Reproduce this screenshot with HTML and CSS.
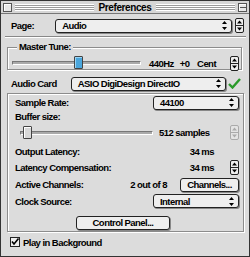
FILE: index.html
```html
<!doctype html>
<html>
 <head>
	<meta charset="UTF-8">
	<title>Preferences</title>
	<link rel="stylesheet" href="styles.css">
 </head>
 <body>
	<div class="window">
		<div class="titlebar">
			<span class="tbox"></span>
			<span class="stripes"></span>
			<span class="title">Preferences</span>
			<span class="stripes"></span>
			<span class="tbox collapse"></span>
		</div>
		<div class="body">
			<div class="row page-row">
				<span class="label">Page:</span>
				<div class="popup page-pop">Audio<svg class="arr" width="5" height="9" viewBox="0 0 5 9"><path d="M2.5 0L5 3H0z M2.5 9L5 6H0z" fill="#000"/></svg></div>
				<svg class="spin" width="9" height="15" viewBox="0 0 9 15"><rect x="0.5" y="0.5" width="8" height="14" rx="1.5" fill="#eee" stroke="#222"/><line x1="1" y1="7.5" x2="8" y2="7.5" stroke="#222"/><path d="M4.5 2.5L7 5.5H2z M4.5 12.5L7 9.5H2z" fill="#000"/></svg>
			</div>
			<div class="sep"></div>
			<fieldset class="group tune">
				<legend>Master Tune:</legend>
				<div class="row slider-row">
					<div class="track tune-track"><span class="thumb blue" style="left:61px"></span></div>
					<span class="val hz">440Hz</span>
					<span class="val">+0</span>
					<span class="val cent">Cent</span>
					<svg class="spin" width="9" height="15" viewBox="0 0 9 15"><rect x="0.5" y="0.5" width="8" height="14" rx="1.5" fill="#eee" stroke="#222"/><line x1="1" y1="7.5" x2="8" y2="7.5" stroke="#222"/><path d="M4.5 2.5L7 5.5H2z M4.5 12.5L7 9.5H2z" fill="#000"/></svg>
				</div>
			</fieldset>
			<div class="row card-row">
				<span class="label">Audio Card</span>
				<div class="popup card-pop">ASIO DigiDesign DirectIO<svg class="arr" width="5" height="9" viewBox="0 0 5 9"><path d="M2.5 0L5 3H0z M2.5 9L5 6H0z" fill="#000"/></svg></div>
				<svg class="ok" width="13" height="11" viewBox="0 0 13 11"><path d="M1 6L4.5 9.5L12 1" fill="none" stroke="#2a9a2a" stroke-width="2.4"/></svg>
			</div>
			<div class="group main">
				<div class="row line r-sample">
					<span class="label">Sample Rate:</span>
					<div class="popup small-pop">44100<svg class="arr" width="5" height="9" viewBox="0 0 5 9"><path d="M2.5 0L5 3H0z M2.5 9L5 6H0z" fill="#000"/></svg></div>
				</div>
				<div class="row line r-buf"><span class="label">Buffer size:</span></div>
				<div class="row slider-row r-slide">
					<div class="track buf-track"><span class="thumb" style="left:2px"></span></div>
					<span class="val">512 samples</span>
					<svg class="spin dim" width="9" height="15" viewBox="0 0 9 15"><rect x="0.5" y="0.5" width="8" height="14" rx="1.5" fill="#e4e4e4" stroke="#aaa"/><line x1="1" y1="7.5" x2="8" y2="7.5" stroke="#aaa"/><path d="M4.5 2.5L7 5.5H2z M4.5 12.5L7 9.5H2z" fill="#aaa"/></svg>
				</div>
				<div class="row line">
					<span class="label">Output Latency:</span>
					<span class="ms no-spin">34 ms</span>
				</div>
				<div class="row line">
					<span class="label">Latency Compensation:</span>
					<span class="ms">34 ms</span>
					<svg class="spin" width="9" height="15" viewBox="0 0 9 15"><rect x="0.5" y="0.5" width="8" height="14" rx="1.5" fill="#eee" stroke="#222"/><line x1="1" y1="7.5" x2="8" y2="7.5" stroke="#222"/><path d="M4.5 2.5L7 5.5H2z M4.5 12.5L7 9.5H2z" fill="#000"/></svg>
				</div>
				<div class="row line r-active">
					<span class="label">Active Channels:</span>
					<span class="count">2 out of 8</span>
					<span class="btn chan-btn">Channels...</span>
				</div>
				<div class="row line r-clock">
					<span class="label">Clock Source:</span>
					<div class="popup small-pop">Internal<svg class="arr" width="5" height="9" viewBox="0 0 5 9"><path d="M2.5 0L5 3H0z M2.5 9L5 6H0z" fill="#000"/></svg></div>
				</div>
				<div class="row r-cp">
					<span class="btn cp-btn">Control Panel...</span>
				</div>
			</div>
			<label class="row check-row">
				<svg class="cbox" width="10" height="10" viewBox="0 0 10 10"><rect x="0.5" y="0.5" width="9" height="9" fill="#eee" stroke="#222"/><path d="M2 4.5L4 7L8.5 1.5" fill="none" stroke="#000" stroke-width="1.6"/></svg>
				Play in Background
			</label>
		</div>
	</div>
 </body>
</html>
```

FILE: styles.css
```css
body{margin:0;background:#fff}
.window{
	width:248px;height:255px;
	border:1px solid #333;
	background:#dcdcdc;
	font-family:"Liberation Sans",Arial,sans-serif;
	font-weight:bold;
	font-size:9.5px;
	letter-spacing:-0.55px;
	color:#000;
	display:flex;flex-direction:column;
}
/* title bar */
.titlebar{
	height:12px;
	display:flex;align-items:center;
	padding:0 2px;
	border-bottom:1px solid #777;
	background:#d6d6d6;
}
.tbox{
	width:7px;height:7px;
	border:1px solid #555;
	background:#e8e8e8;
	box-shadow:inset 1px 1px 0 #fff;
	flex:none;
}
.collapse{
	background:linear-gradient(#e8e8e8 3px,#555 3px,#555 4px,#e8e8e8 4px);
}
.stripes{
	flex:1;height:7px;margin:0 3px;
	background:repeating-linear-gradient(#fff 0,#fff 1px,#9a9a9a 1px,#9a9a9a 2px);
}
.title{font-size:10px;padding:0 2px;letter-spacing:-0.4px}

.body{flex:1;display:flex;flex-direction:column;padding:0 5px 0 6px}
.row{display:flex;align-items:center}
.label{white-space:nowrap}

.page-row{height:15px;margin-top:4px;padding-left:4px}
.page-pop{margin-left:21px;width:170px}
.page-row .spin{margin-left:3px}

.sep{height:0;border-top:1px solid #888;border-bottom:1px solid #fff;margin:3px -2px 0 -2px}

/* popups and buttons */
.popup{
	height:12px;
	display:flex;align-items:center;justify-content:space-between;
	padding:0 4px 0 6px;
	border:1px solid #222;
	border-radius:3px;
	background:#eeeeee;
	box-shadow:1px 1px 0 #888;
}
.arr{flex:none}
.spin{flex:none;display:block}
.btn{
	height:12px;line-height:12px;
	border:1px solid #222;
	border-radius:3px;
	background:#eeeeee;
	box-shadow:1px 1px 0 #888;
	text-align:center;
}

/* group boxes */
.group{
	border:1px solid #8c8c8c;
	box-shadow:1px 1px 0 #fff,inset 1px 1px 0 #fff;
	margin:0;
}
fieldset.group{padding:0 2px 0 4px;min-width:0}
.group legend{padding:0 2px;margin-left:5px;line-height:12px;background:#dcdcdc;font-size:9.5px}
.tune{margin-top:3px;height:27px;margin-right:2px}
.slider-row{height:20px}
.track{
	position:relative;
	height:2px;
	border:1px solid #777;
	border-bottom-color:#fff;
	border-right-color:#fff;
	background:#aaa;
}
.thumb{
	position:absolute;top:-6px;
	width:7px;height:11px;
	border:1px solid #444;
	border-radius:1px;
	background:#d8d8d8;
	box-shadow:inset 1px 1px 0 #fff;
}
.thumb.blue{background:#4aa6dc;box-shadow:inset 1px 1px 0 #9ad4f4}
.tune-track{width:127px}
.hz{margin-left:8px}
.val{white-space:nowrap}
.val+.val{margin-left:6px}
.tune .cent{margin-left:auto}
.tune .spin{margin-left:14px}

.card-row{height:15px;margin-top:6px;padding-left:4px}
.card-pop{margin-left:14px;width:143px}
.ok{margin-left:2px}

.main{margin-top:2px;height:136px;padding:1px 4px 0 7px;display:flex;flex-direction:column}
.line{justify-content:space-between}
.line{height:16px}
.r-sample{height:15px}
.r-buf{height:12px}
.r-slide{height:21px}
.r-active{height:19px}
.r-clock{height:14px}
.r-cp{height:22px;align-items:flex-end;justify-content:center;padding:0 8px 1px 0}
.small-pop{width:74px}
.buf-track{width:131px;margin-left:5px}
.r-slide .val{margin-left:6px;margin-right:auto}
.ms{margin-left:auto;margin-right:16px}
.ms.no-spin{margin-right:25px}
.count{margin-left:auto;margin-right:13px}
.chan-btn{width:57px}
.cp-btn{width:92px}

.check-row{height:14px;margin-top:3px;padding-left:3px;gap:3px}
.cbox{display:block}
```
